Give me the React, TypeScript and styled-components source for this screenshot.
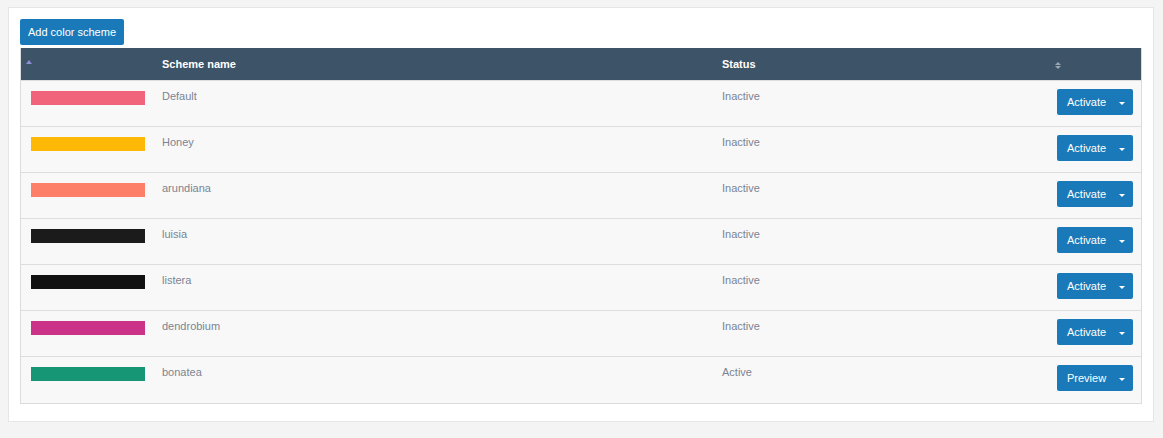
import React from 'react';
import styled, { createGlobalStyle } from 'styled-components';

type Scheme = { name: string; color: string; active: boolean };

const schemes: Scheme[] = [
  { name: 'Default', color: '#f0637a', active: false },
  { name: 'Honey', color: '#feb806', active: false },
  { name: 'arundiana', color: '#fe7f67', active: false },
  { name: 'luisia', color: '#1b1b1b', active: false },
  { name: 'listera', color: '#111111', active: false },
  { name: 'dendrobium', color: '#cb3389', active: false },
  { name: 'bonatea', color: '#169675', active: true },
];

const App: React.FC = () => {
  return (
    <>
      <GlobalStyle />
      <Panel>
        <AddButton>Add color scheme</AddButton>
        <Table>
          <HeaderRow>
            <HeadCell>
              <SortUp />
            </HeadCell>
            <HeadCell>Scheme name</HeadCell>
            <HeadCell>Status</HeadCell>
            <HeadCell>
              <SortBoth>
                <span />
                <span />
              </SortBoth>
            </HeadCell>
          </HeaderRow>
          {schemes.map((s) => (
            <Row key={s.name}>
              <Cell>
                <Swatch color={s.color} />
              </Cell>
              <Cell>{s.name}</Cell>
              <Cell>{s.active ? 'Active' : 'Inactive'}</Cell>
              <ActionCell>
                <SplitButton>
                  <MainPart>{s.active ? 'Preview' : 'Activate'}</MainPart>
                  <CaretPart>
                    <Caret />
                  </CaretPart>
                </SplitButton>
              </ActionCell>
            </Row>
          ))}
        </Table>
      </Panel>
    </>
  );
};

export default App;

const GlobalStyle = createGlobalStyle`
    html, body {
      margin: 0;
      padding: 0;
      background: #f4f4f4;
      font-family: "Liberation Sans", Arial, sans-serif;
      font-size: 11px;
    }
    #root {
      padding: 7px 9px 16px 8px;
    }
  `,
  Panel = styled.div`
    background: #ffffff;
    border: 1px solid #e6e6e6;
    padding: 11px 11px 17px 11px;
    display: flex;
    flex-direction: column;
    align-items: flex-start;
    gap: 3px;
  `,
  AddButton = styled.button`
    height: 26px;
    width: 104px;
    padding: 0;
    border: none;
    border-radius: 2px;
    background: #1a7ab9;
    color: #ffffff;
    font-family: inherit;
    font-size: 11px;
  `,
  Table = styled.div`
    width: 100%;
    box-sizing: border-box;
    border: 1px solid #dcdcdc;
    border-top: none;
    display: grid;
    grid-template-columns: 131px 560px 333px 1fr;
  `,
  HeaderRow = styled.div`
    display: contents;
  `,
  HeadCell = styled.div`
    height: 33px;
    box-sizing: border-box;
    background: #3d5367;
    border-bottom: 1px solid #dddddd;
    color: #ffffff;
    font-weight: bold;
    display: flex;
    align-items: center;
    padding: 0 10px;
  `,
  SortUp = styled.span`
    width: 0;
    height: 0;
    border-left: 3px solid transparent;
    border-right: 3px solid transparent;
    border-bottom: 4px solid #8e8ed6;
    margin: -4px 0 0 -5px;
  `,
  SortBoth = styled.span`
    display: flex;
    flex-direction: column;
    gap: 1px;
    margin-top: 2px;
    span {
      width: 0;
      height: 0;
      border-left: 3px solid transparent;
      border-right: 3px solid transparent;
    }
    span:first-child {
      border-bottom: 3px solid #9aa5b1;
    }
    span:last-child {
      border-top: 3px solid #9aa5b1;
    }
  `,
  Row = styled.div`
    display: contents;
  `,
  Cell = styled.div`
    height: 46px;
    box-sizing: border-box;
    background: #f8f8f8;
    border-bottom: 1px solid #dddddd;
    padding: 9px 10px 0 10px;
    color: #7b8494;
    line-height: 12px;
    ${Row}:last-child & {
      border-bottom: none;
    }
  `,
  ActionCell = styled(Cell)`
    padding: 8px 8px 0 0;
    display: flex;
    justify-content: flex-end;
    align-items: flex-start;
  `,
  Swatch = styled.div<{ color: string }>`
    width: 114px;
    height: 14px;
    margin-top: 1px;
    background: ${(p) => p.color};
  `,
  SplitButton = styled.div`
    display: flex;
    height: 26px;
    width: 76px;
    border-radius: 2px;
    background: #1a7ab9;
    color: #ffffff;
    overflow: hidden;
  `,
  MainPart = styled.span`
    flex: 1;
    display: flex;
    align-items: center;
    padding-left: 10px;
    font-size: 11px;
  `,
  CaretPart = styled.span`
    width: 22px;
    display: flex;
    align-items: center;
    justify-content: center;
  `,
  Caret = styled.span`
    width: 0;
    height: 0;
    margin-top: 2px;
    border-left: 3px solid transparent;
    border-right: 3px solid transparent;
    border-top: 3px solid #ffffff;
  `;
